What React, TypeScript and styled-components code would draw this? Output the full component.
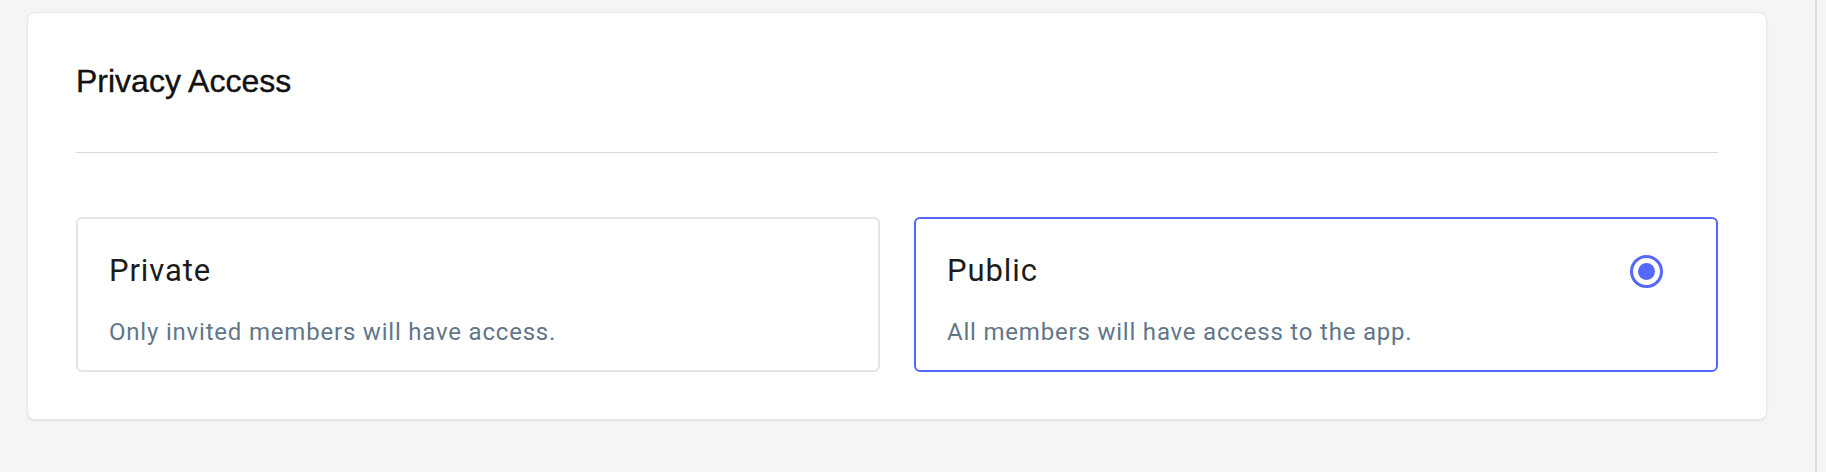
import React, { useState } from "react";
import styled, { createGlobalStyle } from "styled-components";

const GlobalStyle = createGlobalStyle`
  html, body {
    margin: 0;
    padding: 0;
    background: #f4f5f7;
    font-family: Roboto, "Liberation Sans", Arial, sans-serif;
  }
  * { box-sizing: border-box; }
`;

const Page = styled.div`
  display: flex;
  min-height: 472px;
  background: #f4f5f7;
`;

const Main = styled.main`
  flex: 1;
  padding: 12px 48px 0 27px;
`;

const SideEdge = styled.aside`
  width: 11px;
  border-left: 2px solid #dcdcdf;
  background: #f4f5f7;
`;

const Card = styled.section`
  background: #ffffff;
  border: 1px solid #e7e8eb;
  border-radius: 8px;
  box-shadow: 0 1px 2px rgba(0, 0, 0, 0.08);
  padding: 48px 48px 47px 48px;
`;

const Heading = styled.h2`
  margin: 0;
  font-family: "Liberation Sans", Arial, sans-serif;
  font-weight: 400;
  font-size: 32px;
  line-height: 41px;
  color: #111111;
  -webkit-text-stroke: 0.35px #111111;
`;

const Divider = styled.hr`
  margin: 50px 0 64px;
  border: none;
  height: 1px;
  background: #d8d9dc;
`;

const Options = styled.div`
  display: grid;
  grid-template-columns: 1fr 1fr;
  gap: 34px;
`;

const Option = styled.button<{ $selected: boolean }>`
  display: flex;
  flex-direction: column;
  text-align: left;
  background: #ffffff;
  border: 2px solid ${(p) => (p.$selected ? "#5468fb" : "#e4e4e6")};
  border-radius: 6px;
  padding: 34px 53px 24px 31px;
  cursor: pointer;
  font: inherit;
`;

const OptionHeader = styled.div`
  display: flex;
  align-items: center;
  justify-content: space-between;
  height: 36px;
`;

const OptionTitle = styled.span`
  font-family: Roboto, sans-serif;
  font-size: 31px;
  line-height: 36px;
  letter-spacing: 0.9px;
  color: #1c1c1c;
`;

const OptionText = styled.span`
  margin-top: 29px;
  font-family: Roboto, sans-serif;
  font-size: 24px;
  line-height: 28px;
  letter-spacing: 0.8px;
  color: #627689;
`;

const Radio = styled.span`
  width: 33px;
  height: 33px;
  border-radius: 50%;
  border: 3px solid #5468fb;
  display: flex;
  align-items: center;
  justify-content: center;

  &::after {
    content: "";
    width: 17px;
    height: 17px;
    border-radius: 50%;
    background: #5468fb;
  }
`;

type Access = "private" | "public";

const OPTIONS: { id: Access; title: string; text: string }[] = [
  { id: "private", title: "Private", text: "Only invited members will have access." },
  { id: "public", title: "Public", text: "All members will have access to the app." },
];

export default function App() {
  const [access, setAccess] = useState<Access>("public");
  return (
    <>
      <GlobalStyle />
      <Page>
        <Main>
          <Card>
            <Heading>Privacy Access</Heading>
            <Divider />
            <Options>
              {OPTIONS.map((o) => (
                <Option
                  key={o.id}
                  type="button"
                  $selected={access === o.id}
                  onClick={() => setAccess(o.id)}
                >
                  <OptionHeader>
                    <OptionTitle>{o.title}</OptionTitle>
                    {access === o.id && <Radio />}
                  </OptionHeader>
                  <OptionText>{o.text}</OptionText>
                </Option>
              ))}
            </Options>
          </Card>
        </Main>
        <SideEdge />
      </Page>
    </>
  );
}
